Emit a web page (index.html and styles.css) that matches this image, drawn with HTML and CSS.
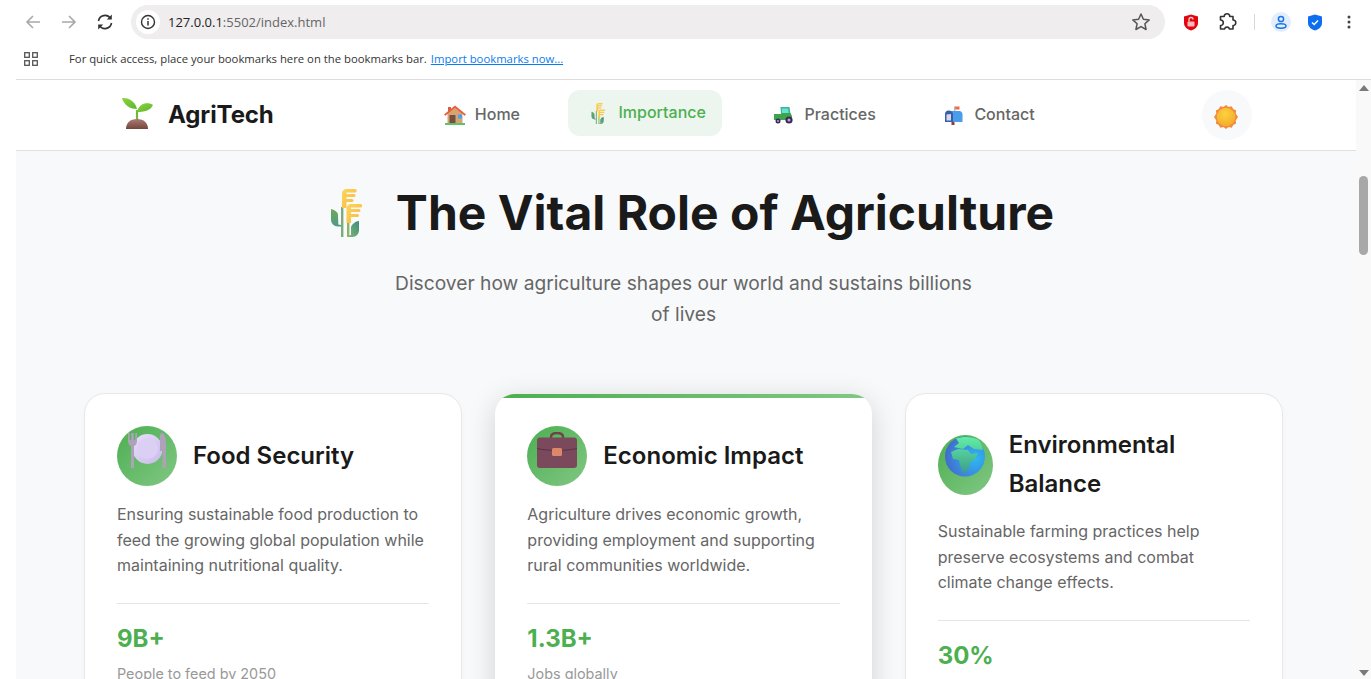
FILE: index.html
```html
<!DOCTYPE html>
<html lang="en">
<head>
<meta charset="utf-8">
<title>AgriTech</title>
<link rel="stylesheet" href="styles.css">
</head>
<body>
<svg class="defs" width="0" height="0" aria-hidden="true">
  <defs>
    <linearGradient id="gHead" x1="0" y1="0" x2="1" y2="1"><stop offset="0" stop-color="#fbd65c"/><stop offset="1" stop-color="#f9b83f"/></linearGradient>
    <linearGradient id="gLeaf" x1="0" y1="0" x2="0" y2="1"><stop offset="0" stop-color="#6fa85a"/><stop offset="1" stop-color="#4e9a8a"/></linearGradient>
    <linearGradient id="gLeaf2" x1="1" y1="0" x2="0" y2="1"><stop offset="0" stop-color="#3c8a86"/><stop offset="1" stop-color="#7fb76a"/></linearGradient>
    <symbol id="wheat" viewBox="20 14 32 48">
      <path d="M21 34c3 .6 6 2.400 7 5l.3 10.500 2.700 .5v1.500h-3c-4 0-7-3-7-7z" fill="url(#gLeaf)"/>
      <path d="M49 46v9c0 4-3 7-6.500 7H39v-1.500l2-.5v-8c1-3 5-6 8-6z" fill="url(#gLeaf2)"/>
      <rect x="31" y="32" width="2.400" height="30" fill="#79ad7b"/>
      <rect x="37" y="42" width="2.400" height="20" fill="#8cb46c"/>
      <path d="M32 33V19c0-3 2-5 5-5h8a1.700 1.700 0 0 1 0 3.500h-8.500V19H44a1.500 1.500 0 0 1 0 3h-7.500v2H42a1.500 1.500 0 0 1 0 3h-5.500v6z" fill="url(#gHead)"/>
      <path d="M36.500 48V34c0-3 2-5 5-5h9a1.700 1.700 0 0 1 0 3.500H41V34h8a1.500 1.500 0 0 1 0 3h-8v2h6.500a1.500 1.500 0 0 1 0 3H41v6z" fill="url(#gHead)"/>
    </symbol>
  </defs>
</svg>

<header class="chrome">
  <div class="toolbar">
    <div class="tb-buttons">
      <svg class="tb-icon" viewBox="0 0 18 18"><path d="M16 9H3M9 3 3 9l6 6" fill="none" stroke="#a8a8a8" stroke-width="1.600"/></svg>
      <svg class="tb-icon" viewBox="0 0 18 18"><path d="M2 9h13M9 3l6 6-6 6" fill="none" stroke="#a8a8a8" stroke-width="1.600"/></svg>
      <svg class="tb-icon" viewBox="0 0 18 18"><path d="M2.500 8a6.600 6.600 0 0 1 12-2.600M15.500 10a6.600 6.600 0 0 1-12 2.600" fill="none" stroke="#333" stroke-width="1.600"/><path d="M15.800 1.500v5h-5zM2.200 16.500v-5h5z" fill="#333"/></svg>
    </div>
    <div class="omnibox">
      <span class="info-chip"><svg width="16" height="16" viewBox="0 0 16 16"><circle cx="8" cy="8" r="6.500" fill="none" stroke="#333" stroke-width="1.400"/><path d="M8 7v4.500M8 4.300v1.500" stroke="#333" stroke-width="1.500"/></svg></span>
      <span class="url"><span class="url-host">127.0.0.1</span>:5502/index.html</span>
      <svg class="star" width="20" height="20" viewBox="0 0 20 20"><path d="m10 2 2.400 5.300 5.800.6-4.300 3.900 1.200 5.700L10 14.600l-5.100 2.900 1.200-5.700L1.800 7.900l5.800-.6z" fill="none" stroke="#555" stroke-width="1.500" stroke-linejoin="round"/></svg>
    </div>
    <div class="tb-ext">
      <svg class="ext-shield" width="16" height="17" viewBox="0 0 16 17"><path d="M8 .5 15 2.500V9c0 4-3.500 6.500-7 7.500C4.500 15.500 1 13 1 9V2.500z" fill="#e0060f"/><rect x="4.500" y="7.500" width="7" height="5" rx="1" fill="#f8b8b8"/><path d="M6 7.500V5.500a2 2 0 0 1 4 0" fill="none" stroke="#f8d0d0" stroke-width="1.300"/></svg>
      <svg class="ext-puzzle" width="20" height="20" viewBox="0 0 20 20"><path d="M7.200 4.500a2.800 2.800 0 0 1 5.600 0H16v3.500a2.800 2.800 0 0 1 0 5.600V17h-3.500a2.600 2.600 0 0 0-5 0H3.500v-3.400a2.800 2.800 0 0 0 0-5.600V4.500z" fill="none" stroke="#333" stroke-width="1.600" stroke-linejoin="round"/></svg>
      <span class="ext-sep"></span>
      <span class="profile"><svg width="14" height="14" viewBox="0 0 14 14"><circle cx="7" cy="4" r="2.600" fill="none" stroke="#1a73e8" stroke-width="1.500"/><ellipse cx="7" cy="11" rx="5" ry="2.200" fill="none" stroke="#1a73e8" stroke-width="1.500"/></svg></span>
      <svg class="ext-check" width="16" height="17" viewBox="0 0 16 17"><path d="M8 .5 15 2.500V9c0 4-3.500 6.500-7 7.500C4.500 15.500 1 13 1 9V2.500z" fill="#0d6ff0"/><path d="m5 8.500 2.200 2L11 6.500" fill="none" stroke="#fff" stroke-width="1.500"/></svg>
      <svg class="ext-dots" width="4" height="14" viewBox="0 0 4 14"><circle cx="2" cy="2" r="1.500" fill="#444"/><circle cx="2" cy="7" r="1.500" fill="#444"/><circle cx="2" cy="12" r="1.500" fill="#444"/></svg>
    </div>
  </div>
  <div class="bookmarks">
    <svg class="apps" width="14" height="14" viewBox="0 0 14 14"><g fill="none" stroke="#555" stroke-width="1.300"><rect x=".7" y=".7" width="4.600" height="4.600"/><rect x="8.700" y=".7" width="4.600" height="4.600"/><rect x=".7" y="8.700" width="4.600" height="4.600"/><rect x="8.700" y="8.700" width="4.600" height="4.600"/></g></svg>
    <span class="bm-text">For quick access, place your bookmarks here on the bookmarks bar.</span>
    <a class="bm-link" href="#">Import bookmarks now...</a>
  </div>
</header>

<div class="viewport">
  <main class="page">
    <nav class="nav">
      <a class="logo" href="#">
        <svg class="logo-icon" width="34" height="34" viewBox="0 0 34 34">
          <defs><linearGradient id="gSoil" x1="0" y1="0" x2="0" y2="1"><stop offset="0" stop-color="#ab7b72"/><stop offset="1" stop-color="#74463c"/></linearGradient><linearGradient id="gSprout" x1="0" y1="0" x2="1" y2="1"><stop offset="0" stop-color="#8fd43a"/><stop offset="1" stop-color="#5cb531"/></linearGradient></defs>
          <path d="M17 24V13" fill="none" stroke="#6dbb35" stroke-width="2.200"/>
          <path d="M6 32c0-6 4-10 11-10s11 4 11 10z" fill="url(#gSoil)"/>
          <path d="M2 1c5-.5 13 2 15 11-6 0-13-3-15-11z" fill="url(#gSprout)"/>
          <path d="M33 8c-4-3-14-3-16 7 7 0 13-1 16-7z" fill="url(#gSprout)"/>
        </svg>
        <span>AgriTech</span>
      </a>
      <ul class="nav-links">
        <li><a class="nav-link" href="#"><span class="nav-icon">
          <svg width="22" height="22" viewBox="0 0 22 22"><rect x="1" y="19" width="20" height="2" fill="#5cc46a"/><path d="M3.500 9 11 3l7.500 6v10h-15z" fill="#d9a272"/><path d="M4 3h3v4H4z" fill="#c4673f"/><path d="M0 10.500 11 1.500l11 9-1.300 1.200L11 3.800 1.300 11.700z" fill="#f0593a"/><rect x="5.500" y="11" width="6" height="8" fill="#74503f"/><rect x="14" y="10.500" width="4" height="4" fill="#3ea6ea"/></svg>
        </span><span class="nav-label">Home</span></a></li>
        <li><a class="nav-link is-active" href="#"><span class="nav-icon">
          <svg width="14" height="21"><use href="#wheat"/></svg>
        </span><span class="nav-label">Importance</span></a></li>
        <li><a class="nav-link" href="#"><span class="nav-icon">
          <svg width="20" height="17" viewBox="0 0 20 17"><path d="M6.500 0h9l1 7H7z" fill="#3fb48f"/><path d="M8 1.500h6l.8 5.500H8z" fill="#62e4d6"/><path d="M0 7h7l1-1h8.500l1.500 3v4H0z" fill="#3ea34a"/><circle cx="4" cy="14" r="2.500" fill="#3a2a5a"/><circle cx="4" cy="14" r="1" fill="#b9a7d6"/><circle cx="15" cy="13" r="3.600" fill="#3a2a5a"/><circle cx="15" cy="13" r="1.500" fill="#b9a7d6"/></svg>
        </span><span class="nav-label">Practices</span></a></li>
        <li><a class="nav-link" href="#"><span class="nav-icon">
          <svg width="18" height="19" viewBox="0 0 18 19"><rect x="10" y="0.500" width="4.500" height="3" fill="#f8683a"/><rect x="9" y="0.500" width="1.300" height="7" fill="#b0b8c4"/><rect x="6.500" y="15" width="3" height="4" fill="#8c3f3f"/><path d="M5 5h9.500c1.500 0 3 1.500 3 3v8H5z" fill="#4a9de8"/><path d="M0 8c0-2 1.500-3.500 3.500-3.500S8 6 8 8v8H0z" fill="#3560a8"/><path d="M1.500 8.500 6 8v6.500H1.500z" fill="#dcd4ec"/></svg>
        </span><span class="nav-label">Contact</span></a></li>
      </ul>
      <button class="theme-toggle" type="button" aria-label="Toggle theme">
        <svg width="24" height="24" viewBox="0 0 24 24"><defs><radialGradient id="gSun" cx=".45" cy=".35" r=".7"><stop offset="0" stop-color="#fdd23e"/><stop offset="1" stop-color="#f2a92c"/></radialGradient></defs><path d="m12 0 2.600 1.900 3.100-.6 1.500 2.800 2.900 1.300-.4 3.100L24 12l-2.300 3.500.4 3.100-2.900 1.300-1.500 2.800-3.100-.6L12 24l-2.600-2-3.100.7-1.500-2.800-2.900-1.300.4-3.100L0 12l2.300-3.500-.4-3.100 2.900-1.300 1.500-2.800 3.100.6z" fill="#f4893a"/><circle cx="12" cy="12" r="9.300" fill="url(#gSun)"/></svg>
      </button>
    </nav>

    <section class="content">
      <h1 class="hero-title">
        <span class="hero-icon"><svg width="32" height="48"><use href="#wheat"/></svg></span>
        <span>The Vital Role of Agriculture</span>
      </h1>
      <p class="hero-sub">Discover how agriculture shapes our world and sustains billions of lives</p>

      <div class="cards">
        <article class="card">
          <div class="card-head">
            <div class="card-icon">
              <svg width="40" height="36" viewBox="0 0 40 36"><defs><linearGradient id="gPlate" x1="0" y1="0" x2="1" y2="1"><stop offset="0" stop-color="#e9e0fa"/><stop offset="1" stop-color="#c9b9ea"/></linearGradient></defs><circle cx="20.500" cy="17" r="15" fill="url(#gPlate)"/><circle cx="20.500" cy="16.500" r="10.500" fill="#dccff4"/><path d="M1 1v8c0 3 1.500 4.500 3 5v22h3V14c1.500-.5 3-2 3-5V1H8.300v7H6.800V1H4.200v7H2.700V1z" fill="#ada2b9"/><path d="M34 1c3 0 5 3 5 10v25h-3.500V19H33V5c0-2 .5-4 1-4z" fill="#ada2b9"/></svg>
            </div>
            <h2 class="card-title">Food Security</h2>
          </div>
          <p class="card-text">Ensuring sustainable food production to feed the growing global population while maintaining nutritional quality.</p>
          <div class="card-stat">
            <div class="stat-value">9B+</div>
            <div class="stat-label">People to feed by 2050</div>
          </div>
        </article>

        <article class="card card-featured">
          <div class="card-head">
            <div class="card-icon">
              <svg width="40" height="36" viewBox="0 0 40 36"><path d="M14 7V5c0-2.500 2-4 6-4s6 1.500 6 4v2" fill="none" stroke="#6e4448" stroke-width="2.500"/><rect y="5.500" width="40" height="30.500" rx="3" fill="#7a4a5c"/><path d="M0 16.500c10 2.500 30 2.500 40 0" fill="none" stroke="#5c3048" stroke-width="1"/><rect x="15" y="16" width="10" height="8" rx="1.500" fill="#dc8868"/></svg>
            </div>
            <h2 class="card-title">Economic Impact</h2>
          </div>
          <p class="card-text">Agriculture drives economic growth, providing employment and supporting rural communities worldwide.</p>
          <div class="card-stat">
            <div class="stat-value">1.3B+</div>
            <div class="stat-label">Jobs globally</div>
          </div>
        </article>

        <article class="card">
          <div class="card-head">
            <div class="card-icon card-icon-tight">
              <svg width="40" height="41" viewBox="0 0 40 41"><defs><radialGradient id="gGlobe" cx=".75" cy=".55" r=".8"><stop offset="0" stop-color="#2eb8f5"/><stop offset="1" stop-color="#4465c8"/></radialGradient><linearGradient id="gLand" gradientUnits="userSpaceOnUse" x1="0" y1="0" x2="0" y2="38"><stop offset="0" stop-color="#62f0a8"/><stop offset="1" stop-color="#3c9a88"/></linearGradient></defs><circle cx="20" cy="20.500" r="20" fill="url(#gGlobe)"/><path d="M11 2.500C18 0 27 .5 33 3.500c3 3 4.500 6.500 5 10.500l-9-1-6-4-5 4-9-2 5-4z" fill="url(#gLand)"/><path d="M6 16l7-3 10 1 3 4 7-1-3 6-5 4-2 7-5 3-3-8-1-5-6-1z" fill="url(#gLand)"/></svg>
            </div>
            <h2 class="card-title">Environmental Balance</h2>
          </div>
          <p class="card-text">Sustainable farming practices help preserve ecosystems and combat climate change effects.</p>
          <div class="card-stat">
            <div class="stat-value">30%</div>
          </div>
        </article>
      </div>
    </section>
  </main>
  <aside class="scrollbar" aria-hidden="true">
    <span class="sb-up"></span>
    <span class="sb-thumb"></span>
    <span class="sb-down"></span>
  </aside>
</div>
</body>
</html>
```
FILE: styles.css
```css
* { box-sizing: border-box; }
html, body { margin: 0; padding: 0; height: 100%; }
body {
  height: 679px;
  overflow: hidden;
  display: flex;
  flex-direction: column;
  background: #fff;
  font-family: "Inter", "Liberation Sans", sans-serif;
}
.defs { position: absolute; }
a { text-decoration: none; color: inherit; }

/* browser chrome */
.chrome { flex: none; height: 80px; background: #fff; font-family: "Open Sans", "Liberation Sans", sans-serif; }
.toolbar { height: 44px; display: flex; align-items: center; }
.tb-buttons { width: 131px; display: flex; gap: 18px; padding-left: 24px; flex: none; }
.tb-icon { width: 18px; height: 18px; }
.omnibox {
  width: 1034px;
  height: 34px;
  margin-top: 0;
  display: flex;
  align-items: center;
  background: #efedee;
  border-radius: 17px;
  padding: 0 14px 0 5px;
}
.info-chip {
  width: 24px; height: 24px; border-radius: 50%; background: #fff;
  display: flex; align-items: center; justify-content: center;
}
.url { margin-left: 8px; font-size: 13px; color: #666; flex: 1; }
.url-host { color: #222; }
.tb-ext { flex: 1; display: flex; align-items: center; }
.ext-shield { margin-left: 18px; }
.ext-puzzle { margin-left: 18px; }
.ext-sep { width: 1px; height: 16px; background: #d8d8d8; margin-left: 17px; }
.profile {
  width: 20px; height: 20px; border-radius: 50%; background: #e2eefb; margin-left: 16px;
  display: flex; align-items: center; justify-content: center;
}
.ext-check { margin-left: 16px; }
.ext-dots { margin-left: 24px; }
.bookmarks {
  height: 36px;
  margin-left: 16px;
  padding: 0 0 6px 8px;
  display: flex;
  align-items: center;
  border-bottom: 1px solid #dcdcdc;
  font-size: 11.3px;
}
.apps { flex: none; }
.bm-text { margin-left: 31px; color: #333; }
.bm-link { margin-left: 4px; color: #0b7cf0; text-decoration: underline; }

/* page shell */
.viewport { flex: 1; min-height: 0; display: flex; overflow: hidden; padding-left: 16px; }
.page { flex: 1; min-width: 0; background: #f8f9fa; overflow: hidden; }
.scrollbar {
  flex: none; width: 15px; background: #f9f9f9;
  display: flex; flex-direction: column; align-items: center;
  padding-top: 5px;
}
.sb-up { width: 0; height: 0; border: 5px solid transparent; border-top: 0; border-bottom: 6px solid #7a7a7a; }
.sb-thumb { width: 9px; height: 79px; background: #a8a8a8; border-radius: 5px; margin-top: 85px; }
.sb-down { width: 0; height: 0; border: 5px solid transparent; border-bottom: 0; border-top: 6px solid #7a7a7a; margin-top: auto; margin-bottom: 3px; }

/* site nav */
.nav {
  height: 71px;
  background: #fff;
  border-bottom: 1px solid #e0e0e0;
  padding: 0 104px;
  display: flex;
  align-items: center;
  justify-content: space-between;
}
.logo { display: flex; align-items: center; gap: 14px; font-size: 24px; font-weight: 700; color: #1a1a1a; width: 153px; padding-bottom: 2px; letter-spacing: -.1px; }
.logo-icon { flex: none; margin-left: 0; }
.nav-links { list-style: none; margin: 0; padding: 0; display: flex; gap: 32px; }
.nav-link {
  height: 46px;
  display: flex;
  align-items: center;
  gap: 6px;
  padding: 0 16px;
  border-radius: 12px;
  font-size: 16px;
  font-weight: 500;
  color: #666;
}
.nav-label { margin-bottom: 2px; }
.nav-link.is-active { color: #4caf50; background: #ecf5ee; transform: translateY(-2px); }
.nav-icon { width: 28.5px; display: flex; justify-content: center; align-items: center; }
.theme-toggle {
  width: 50px; height: 50px; border: 0; padding: 3px 2px 0 0; border-radius: 50%;
  background: #f8f9fa;
  display: flex; align-items: center; justify-content: center;
}

/* hero */
.content { padding: 24px 74px 0 69px; }
.hero-title {
  margin: 0;
  display: flex;
  justify-content: center;
  align-items: center;
  gap: 16px;
  font-size: 48px;
  font-weight: 700;
  line-height: 76.8px;
  color: #1a1a1a;
}
.hero-icon { width: 67px; display: flex; justify-content: center; }
.hero-sub {
  width: 600px;
  margin: 16px auto 65px;
  text-align: center;
  font-size: 19.2px;
  line-height: 30.72px;
  color: #666;
}

/* cards */
.cards { display: grid; grid-template-columns: repeat(3, 1fr); gap: 34px; align-items: start; }
.card {
  position: relative;
  background: #fff;
  border-radius: 20px;
  padding: 32px;
  box-shadow: 0 0 0 1px #e8e8e8, 0 2px 8px rgba(0, 0, 0, .03);
  overflow: hidden;
}
.card-featured { box-shadow: 0 6px 28px rgba(0, 0, 0, .16); }
.card-featured::before {
  content: "";
  position: absolute;
  left: 0; right: 0; top: 0;
  height: 4px;
  background: linear-gradient(90deg, #4caf50, #81c784);
}
.card-head { display: flex; align-items: center; gap: 16px; margin-bottom: 16px; }
.card-icon {
  flex: 0 0 60px;
  height: 60px;
  border-radius: 50%;
  background: linear-gradient(135deg, #4caf50, #81c784);
  display: flex;
  justify-content: center;
  align-items: flex-start;
  padding-top: 6px;
}
.card-icon svg { flex: none; }
.card-icon-tight { flex-basis: 55px; padding-top: 1px; }
.card-title { margin: 0; font-size: 24px; font-weight: 600; line-height: 38.4px; color: #1a1a1a; }
.card-text { margin: 0 0 24px; font-size: 16px; line-height: 25.6px; color: #666; }
.card-stat { border-top: 1px solid #e5e5e5; padding-top: 16px; }
.stat-value { font-size: 24px; font-weight: 700; line-height: 38.4px; color: #4caf50; }
.stat-label { font-size: 14.4px; line-height: 23px; color: #999; margin-top: 4px; }
```
